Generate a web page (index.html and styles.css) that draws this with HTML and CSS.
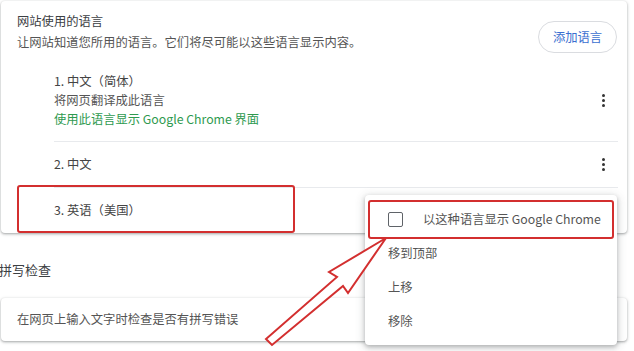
FILE: index.html
```html
<!DOCTYPE html>
<html lang="zh-CN">
<head>
<meta charset="utf-8">
<link rel="stylesheet" href="styles.css">
</head>
<body>
<div class="page">
  <section class="card langs">
    <div class="head">
      <div class="titles">
        <div class="title">网站使用的语言</div>
        <div class="sub">让网站知道您所用的语言。它们将尽可能以这些语言显示内容。</div>
      </div>
      <button class="add">添加语言</button>
    </div>
    <div class="list">
      <div class="item first">
        <div class="info">
          <div class="name">1. 中文（简体）</div>
          <div class="desc">将网页翻译成此语言</div>
          <div class="green">使用此语言显示 Google Chrome 界面</div>
        </div>
        <span class="kebab"><i></i><i></i><i></i></span>
      </div>
      <div class="item">
        <div class="info"><div class="name">2. 中文</div></div>
        <span class="kebab"><i></i><i></i><i></i></span>
      </div>
      <div class="item last">
        <div class="info"><div class="name">3. 英语（美国）</div></div>
      </div>
    </div>
  </section>

  <h2 class="section-title">拼写检查</h2>
  <section class="card spell">
    <div class="spell-text">在网页上输入文字时检查是否有拼写错误</div>
  </section>

  <div class="menu">
    <div class="menu-item check"><span class="box"></span><span>以这种语言显示 Google Chrome</span></div>
    <div class="menu-item">移到顶部</div>
    <div class="menu-item">上移</div>
    <div class="menu-item">移除</div>
  </div>

  <div class="mark mark-item"></div>
  <div class="mark mark-menu"></div>

  <svg class="arrow" width="634" height="351" viewBox="0 0 634 351">
    <polygon points="386,238 329,272 337,277 266,339 272,345 343,286 348,293" fill="#fff" stroke="#d32f2f" stroke-width="2" stroke-linejoin="miter"/>
  </svg>
</div>
</body>
</html>
```
FILE: styles.css
```css
* { box-sizing: border-box; }
html, body { margin: 0; padding: 0; background: #fff; }
body {
  font-family: "Noto Sans CJK SC", "Noto Sans", sans-serif;
  font-size: 12.3px;
  color: #444;
  width: 634px;
  height: 351px;
  overflow: hidden;
}
.page { position: relative; width: 634px; height: 351px; padding-top: 1px; }
.card {
  background: #fff;
  border-radius: 4px;
  box-shadow: 0 1px 2px rgba(60,64,67,.3), 0 1px 3px 1px rgba(60,64,67,.15);
  margin-left: 1px;
  width: 626px;
}
.head {
  display: flex;
  justify-content: space-between;
  align-items: flex-end;
  padding: 10px 10px 0 16px;
}
.title, .sub { line-height: 21px; }
.title { color: #3c4043; }
.sub { color: #555; }
.add {
  font-family: inherit;
  font-size: 12.3px;
  color: #3b6fd0;
  background: #fff;
  border: 1px solid #dadce0;
  border-radius: 16px;
  height: 32px;
  width: 79px;
  padding: 0;
}
.list { padding: 3px 9px 0 53px; }
.item {
  display: flex;
  align-items: center;
  justify-content: space-between;
  padding: 13px 0;
  border-bottom: 1px solid #e8eaed;
  line-height: 19px;
}
.item.first { padding: 16px 0 12px; }
.item.last { border-bottom: none; }
.name { color: #444; }
.desc { color: #555; }
.green { color: #2e9a4f; }
.kebab {
  display: flex;
  flex-direction: column;
  gap: 2px;
  margin-right: 13px;
}
.kebab i { width: 3px; height: 3px; border-radius: 50%; background: #333; display: block; }
.section-title {
  font-size: 13px;
  font-weight: normal;
  color: #3c4043;
  margin: 27px 0 18px -1px;
  line-height: 20px;
}
.spell { padding: 12px 16px; line-height: 19px; }
.spell-text { color: #555; }
.menu {
  position: absolute;
  left: 365px;
  top: 195px;
  width: 252px;
  height: 150px;
  background: #fff;
  border-radius: 4px;
  box-shadow: 0 2px 4px rgba(60,64,67,.3), 0 2px 8px 2px rgba(60,64,67,.15);
  padding: 7px 0 6px;
}
.menu-item {
  height: 34px;
  display: flex;
  align-items: center;
  padding-left: 23px;
  color: #555;
}
.menu-item.check { gap: 20px; }
.box {
  width: 15px; height: 15px;
  border: 1.5px solid #5f6368;
  border-radius: 2px;
}
.mark {
  position: absolute;
  border: 2px solid #d32f2f;
  border-radius: 3px;
}
.mark-item { left: 17px; top: 185px; width: 278px; height: 48px; }
.mark-menu { left: 368px; top: 200px; width: 246px; height: 39px; }
.arrow { position: absolute; left: 0; top: 0; pointer-events: none; }
```
